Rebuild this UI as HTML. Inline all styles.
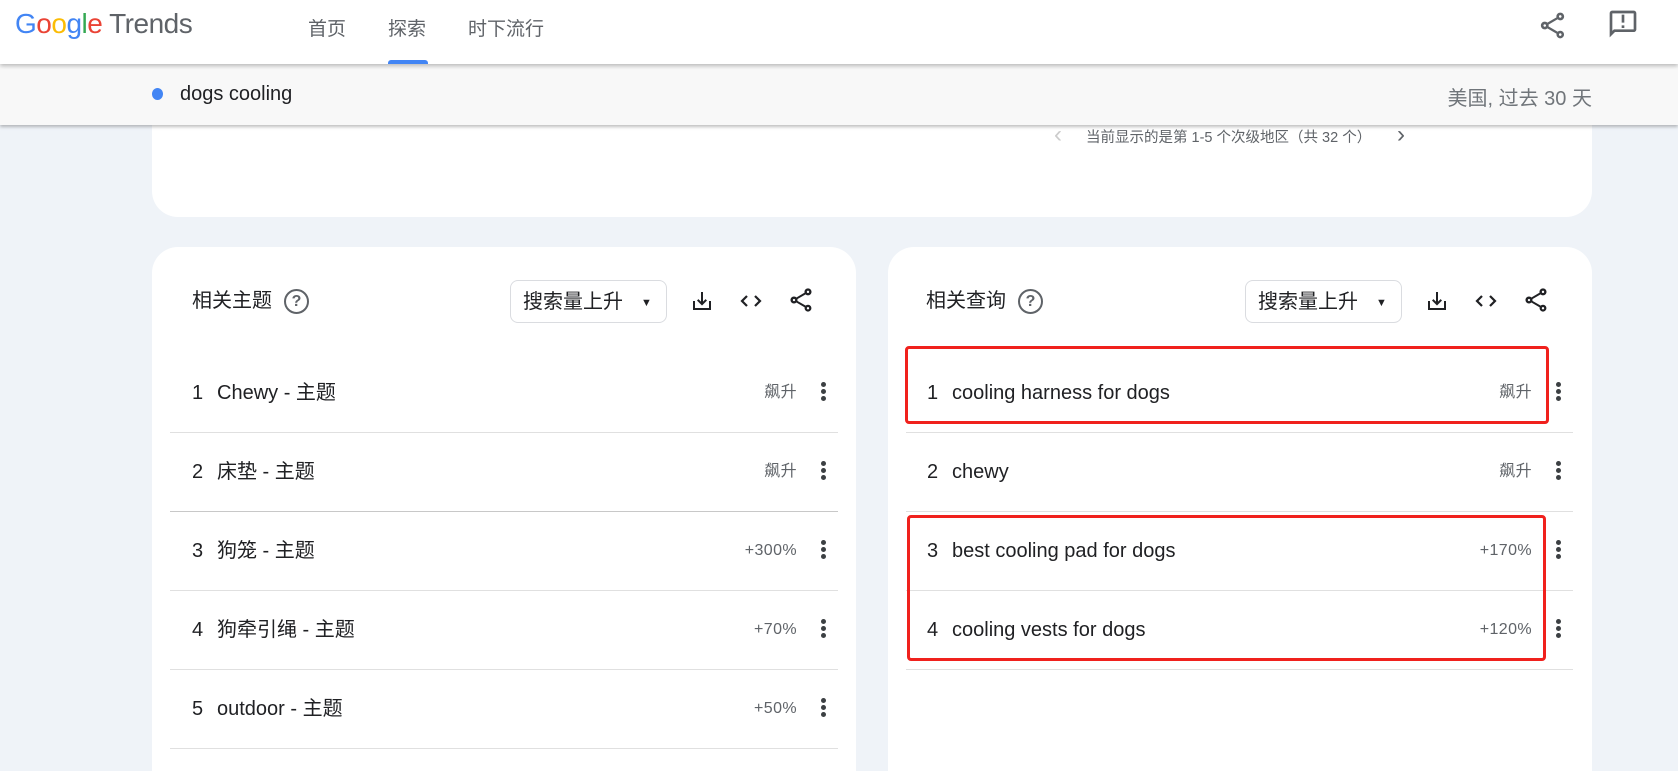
<!DOCTYPE html>
<html style="width:1678px;height:771px;overflow:hidden"><head><meta charset="utf-8"><style>
*{margin:0;padding:0;box-sizing:border-box}
body{width:1678px;height:771px;overflow:hidden;background:#eff3f8;font-family:"Liberation Sans","Noto Sans CJK SC",sans-serif;color:#202124;position:relative}
.abs{position:absolute}
.hdr{left:0;top:0;width:1678px;height:64px;background:#fff;z-index:3;box-shadow:0 2px 4px rgba(0,0,0,.25)}
.nav{top:14px;font-size:19px;color:#5f6368}
.sb{left:0;top:64px;width:1678px;height:61px;background:#f8f8f8;z-index:2;box-shadow:0 2px 3px rgba(0,0,0,.25)}
.card{background:#fff;border-radius:26px}
.title{font-size:20px;color:#202124;line-height:24px}
.dd{border:1px solid #dadce0;border-radius:8px;width:157px;height:43px;background:#fff;font-size:20px;line-height:24px;padding:9px 0 0 12px}
.row{height:79px;border-bottom:1px solid #e0e0e0;font-size:20px}
.num{position:absolute;top:27px;line-height:24px;height:24px}
.val{position:absolute;top:29px;line-height:20px;font-size:16px;letter-spacing:.4px;color:#5f6368;text-align:right;width:110px}
.dots{position:absolute;top:28px;width:5px}
.dots i{display:block;width:5px;height:5px;border-radius:50%;background:#3c4043;margin-bottom:2px}
.red{border:3px solid #f0211d;border-radius:4px}
</style></head><body>
<div class="abs hdr">
 <div class="abs" style="left:15px;top:8px;font-size:28px;letter-spacing:-0.5px"><span style="color:#4285f4">G</span><span style="color:#ea4335">o</span><span style="color:#fbbc05">o</span><span style="color:#4285f4">g</span><span style="color:#34a853">l</span><span style="color:#ea4335">e</span> <span style="color:#5f6368">Trends</span></div>
 <div class="abs nav" style="left:308px">首页</div>
 <div class="abs nav" style="left:388px">探索</div>
 <div class="abs nav" style="left:468px">时下流行</div>
 <div class="abs" style="left:388px;top:60px;width:40px;height:4px;background:#4285f4;border-radius:3px 3px 0 0"></div>
 <svg class="abs" style="left:1537px;top:10px" width="31" height="31" viewBox="0 0 24 24"><path fill="#5f6368" d="M18 16.08c-.76 0-1.44.3-1.96.77L8.91 12.7c.05-.23.09-.46.09-.7s-.04-.47-.09-.7l7.05-4.11c.54.5 1.25.81 2.04.81 1.66 0 3-1.34 3-3s-1.34-3-3-3-3 1.34-3 3c0 .24.04.47.09.7L8.04 9.81C7.5 9.31 6.79 9 6 9c-1.66 0-3 1.34-3 3s1.34 3 3 3c.79 0 1.5-.31 2.04-.81l7.12 4.16c-.05.21-.08.43-.08.65 0 1.61 1.31 2.92 2.92 2.92s2.92-1.31 2.92-2.92-1.31-2.92-2.92-2.92zM18 4c.55 0 1 .45 1 1s-.45 1-1 1-1-.45-1-1 .45-1 1-1zM6 13c-.55 0-1-.45-1-1s.45-1 1-1 1 .45 1 1-.45 1-1 1zm12 7.02c-.55 0-1-.45-1-1s.45-1 1-1 1 .45 1 1-.45 1-1 1z"/></svg>
 <svg class="abs" style="left:1607px;top:8px" width="32" height="32" viewBox="0 0 24 24"><path fill="#5f6368" d="M20 2H4c-1.1 0-2 .9-2 2v18l4-4h14c1.1 0 2-.9 2-2V4c0-1.1-.9-2-2-2zm0 14H5.17L4 17.17V4h16v12zM11 5h2v6h-2zm0 8h2v2h-2z"/></svg>
</div>
<div class="abs sb">
 <div class="abs" style="left:152px;top:24px;width:11px;height:12px;border-radius:50%;background:#4285f4"></div>
 <div class="abs" style="left:180px;top:19px;font-size:20px">dogs cooling</div>
 <div class="abs" style="right:86px;top:18px;font-size:20px;color:#70757a">美国, 过去 30 天</div>
</div>
<div class="abs card" style="left:152px;top:90px;width:1440px;height:127px;border-radius:0 0 26px 26px"></div>
<div class="abs" style="left:1054px;top:121px;font-size:24px;color:#ccc">‹</div>
<div class="abs" style="left:1086px;top:126px;font-size:14.5px;color:#5f6368">当前显示的是第 1-5 个次级地区（共 32 个）</div>
<div class="abs" style="left:1397px;top:121px;font-size:24px;color:#5f6368">›</div>

<!-- left card -->
<div class="abs card" style="left:152px;top:247px;width:704px;height:560px">
 <div class="abs title" style="left:40px;top:42px">相关主题</div>
 <div class="abs" style="left:132px;top:42px;width:25px;height:25px;border:2px solid #5f6368;border-radius:50%;text-align:center;font-size:16px;line-height:21px;color:#5f6368;font-weight:bold">?</div>
 <div class="abs dd" style="left:358px;top:33px">搜索量上升<span style="position:absolute;left:130px;top:10px;font-size:11px">▼</span></div>
 <svg class="abs" style="left:538px;top:42px" width="24" height="24" viewBox="0 0 24 24"><path fill="#202124" d="M19 12v7H5v-7H3v9h18v-9h-2zm-6 .67l2.59-2.58L17 11.5l-5 5-5-5 1.41-1.41L11 12.670V3h2v9.67z"/></svg>
 <svg class="abs" style="left:586px;top:42px" width="26" height="24" viewBox="0 0 26 24"><path fill="none" stroke="#202124" stroke-width="2.2" d="M9 7l-5 5 5 5M17 7l5 5-5 5"/></svg>
 <svg class="abs" style="left:635px;top:39px" width="28" height="28" viewBox="0 0 24 24"><path fill="#202124" d="M18 16.08c-.76 0-1.44.3-1.96.77L8.91 12.7c.05-.23.09-.46.09-.7s-.04-.47-.09-.7l7.05-4.11c.54.5 1.25.81 2.04.81 1.66 0 3-1.34 3-3s-1.34-3-3-3-3 1.34-3 3c0 .24.04.47.09.7L8.04 9.81C7.5 9.31 6.79 9 6 9c-1.66 0-3 1.34-3 3s1.34 3 3 3c.79 0 1.5-.31 2.04-.81l7.12 4.16c-.05.21-.08.43-.08.65 0 1.61 1.31 2.92 2.92 2.92s2.92-1.31 2.92-2.92-1.31-2.92-2.92-2.92zM18 4c.55 0 1 .45 1 1s-.45 1-1 1-1-.45-1-1 .45-1 1-1zM6 13c-.55 0-1-.45-1-1s.45-1 1-1 1 .45 1 1-.45 1-1 1zm12 7.02c-.55 0-1-.45-1-1s.45-1 1-1 1 .45 1 1-.45 1-1 1z"/></svg>
 <div class="abs" style="left:18px;top:107px;width:668px">
  <div class="row" style="position:relative"><span class="num" style="left:22px">1</span><span class="num" style="left:47px">Chewy - 主题</span><span class="val" style="left:517px">飙升</span><span class="dots" style="left:651px"><i></i><i></i><i></i></span></div>
  <div class="row" style="position:relative;border-bottom-color:#c8c8c8"><span class="num" style="left:22px">2</span><span class="num" style="left:47px">床垫 - 主题</span><span class="val" style="left:517px">飙升</span><span class="dots" style="left:651px"><i></i><i></i><i></i></span></div>
  <div class="row" style="position:relative"><span class="num" style="left:22px">3</span><span class="num" style="left:47px">狗笼 - 主题</span><span class="val" style="left:517px">+300%</span><span class="dots" style="left:651px"><i></i><i></i><i></i></span></div>
  <div class="row" style="position:relative"><span class="num" style="left:22px">4</span><span class="num" style="left:47px">狗牵引绳 - 主题</span><span class="val" style="left:517px">+70%</span><span class="dots" style="left:651px"><i></i><i></i><i></i></span></div>
  <div class="row" style="position:relative"><span class="num" style="left:22px">5</span><span class="num" style="left:47px">outdoor - 主题</span><span class="val" style="left:517px">+50%</span><span class="dots" style="left:651px"><i></i><i></i><i></i></span></div>
 </div>
</div>

<!-- right card -->
<div class="abs card" style="left:888px;top:247px;width:704px;height:560px">
 <div class="abs title" style="left:38px;top:42px">相关查询</div>
 <div class="abs" style="left:130px;top:42px;width:25px;height:25px;border:2px solid #5f6368;border-radius:50%;text-align:center;font-size:16px;line-height:21px;color:#5f6368;font-weight:bold">?</div>
 <div class="abs dd" style="left:357px;top:33px">搜索量上升<span style="position:absolute;left:130px;top:10px;font-size:11px">▼</span></div>
 <svg class="abs" style="left:537px;top:42px" width="24" height="24" viewBox="0 0 24 24"><path fill="#202124" d="M19 12v7H5v-7H3v9h18v-9h-2zm-6 .67l2.59-2.58L17 11.5l-5 5-5-5 1.41-1.41L11 12.67V3h2v9.67z"/></svg>
 <svg class="abs" style="left:585px;top:42px" width="26" height="24" viewBox="0 0 26 24"><path fill="none" stroke="#202124" stroke-width="2.2" d="M9 7l-5 5 5 5M17 7l5 5-5 5"/></svg>
 <svg class="abs" style="left:634px;top:39px" width="28" height="28" viewBox="0 0 24 24"><path fill="#202124" d="M18 16.08c-.76 0-1.44.3-1.96.77L8.91 12.7c.05-.23.09-.46.09-.7s-.04-.47-.09-.7l7.05-4.11c.54.5 1.25.81 2.04.81 1.66 0 3-1.34 3-3s-1.34-3-3-3-3 1.34-3 3c0 .24.04.47.09.7L8.04 9.81C7.5 9.31 6.79 9 6 9c-1.66 0-3 1.34-3 3s1.34 3 3 3c.79 0 1.5-.31 2.04-.81l7.12 4.16c-.05.21-.08.43-.08.65 0 1.61 1.31 2.92 2.92 2.92s2.92-1.31 2.92-2.92-1.31-2.92-2.92-2.92zM18 4c.55 0 1 .45 1 1s-.45 1-1 1-1-.45-1-1 .45-1 1-1zM6 13c-.55 0-1-.45-1-1s.45-1 1-1 1 .45 1 1-.45 1-1 1zm12 7.02c-.55 0-1-.45-1-1s.45-1 1-1 1 .45 1 1-.45 1-1 1z"/></svg>
 <div class="abs" style="left:18px;top:107px;width:667px">
  <div class="row" style="position:relative"><span class="num" style="left:21px">1</span><span class="num" style="left:46px">cooling harness for dogs</span><span class="val" style="left:516px">飙升</span><span class="dots" style="left:650px"><i></i><i></i><i></i></span></div>
  <div class="row" style="position:relative"><span class="num" style="left:21px">2</span><span class="num" style="left:46px">chewy</span><span class="val" style="left:516px">飙升</span><span class="dots" style="left:650px"><i></i><i></i><i></i></span></div>
  <div class="row" style="position:relative"><span class="num" style="left:21px">3</span><span class="num" style="left:46px">best cooling pad for dogs</span><span class="val" style="left:516px">+170%</span><span class="dots" style="left:650px"><i></i><i></i><i></i></span></div>
  <div class="row" style="position:relative"><span class="num" style="left:21px">4</span><span class="num" style="left:46px">cooling vests for dogs</span><span class="val" style="left:516px">+120%</span><span class="dots" style="left:650px"><i></i><i></i><i></i></span></div>
 </div>
</div>
<div class="abs red" style="left:905px;top:346px;width:644px;height:78px"></div>
<div class="abs red" style="left:907px;top:515px;width:639px;height:146px"></div>
</body></html>
